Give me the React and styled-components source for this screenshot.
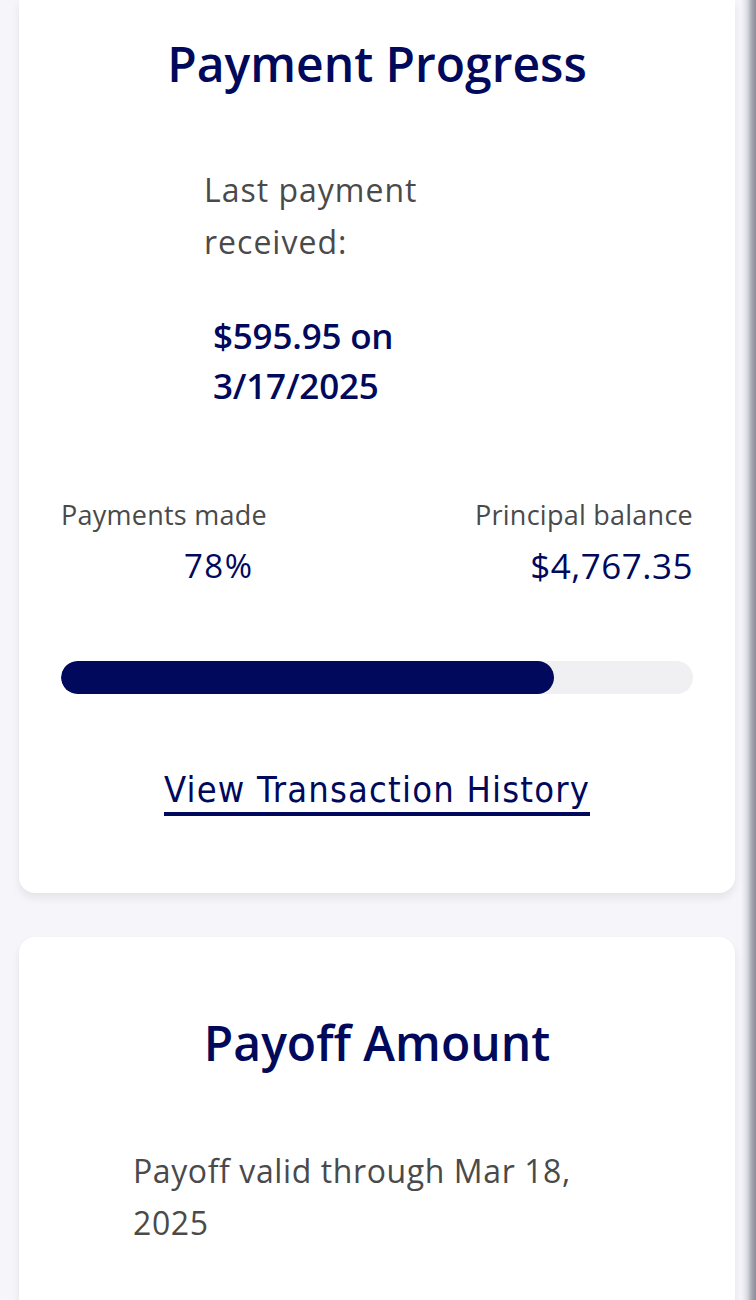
import React from "react";
import styled, { createGlobalStyle } from "styled-components";

const Global = createGlobalStyle`
  html, body { margin: 0; padding: 0; }
  html {
    background: linear-gradient(to right, #f6f6fa 0, #f6f6fa 741px, #dcdce4 747px, #a4a4b0 752px, #8c8c98 756px);
  }
  body { font-family: "Open Sans", sans-serif; -webkit-font-smoothing: antialiased; }
`;

const NAVY = "#00095b";
const GREY = "#4a4a4a";

const Page = styled.div`
  display: flex;
  flex-direction: column;
  gap: 44px;
  padding: 0 21px 0 19px;
  width: 756px;
  box-sizing: border-box;
`;

const Card = styled.section`
  background: #fff;
  border-radius: ${(p) => (p.$cut ? "0 0 16px 16px" : "16px")};
  box-shadow: 0 5px 8px rgba(0, 0, 30, 0.08);
  padding: ${(p) => p.$pad};
  box-sizing: border-box;
  min-height: ${(p) => p.$minH || "auto"};
`;

const Title = styled.h2`
  margin: 0;
  text-align: center;
  font-family: "Open Sans", sans-serif;
  font-weight: 600;
  font-size: 48px;
  line-height: 60px;
  letter-spacing: 0;
  color: ${NAVY};
`;

const LastBlock = styled.div`
  margin: 70px 0 0 143px;
  width: 260px;
`;

const Label = styled.p`
  margin: 0;
  font-family: "Open Sans", sans-serif;
  font-size: 32px;
  line-height: 52px;
  letter-spacing: 1px;
  color: ${GREY};
`;

const Amount = styled.p`
  margin: 43px 0 0;
  padding-left: 9px;
  font-family: "Open Sans", sans-serif;
  font-weight: 600;
  font-size: 35px;
  line-height: 50px;
  letter-spacing: -0.2px;
  color: ${NAVY};
  width: 210px;
`;

const StatRow = styled.div`
  display: flex;
  justify-content: space-between;
  margin-top: 89px;
`;

const Stat = styled.div`
  display: flex;
  flex-direction: column;
  align-items: ${(p) => (p.$right ? "flex-end" : "flex-start")};
  gap: 16px;
`;

const StatLabel = styled.span`
  font-family: "Open Sans", sans-serif;
  font-size: 27px;
  line-height: 30px;
  letter-spacing: 0.25px;
  color: ${GREY};
`;

const StatValue = styled.span`
  font-family: "Open Sans", sans-serif;
  font-size: ${(p) => p.$size}px;
  line-height: 40px;
  letter-spacing: ${(p) => p.$ls}px;
  color: ${NAVY};
  padding-left: ${(p) => p.$indent || 0}px;
`;

const Track = styled.div`
  margin-top: 75px;
  height: 33px;
  border-radius: 17px;
  background: #f0f0f2;
  overflow: hidden;
`;

const Fill = styled.div`
  height: 100%;
  border-radius: 17px;
  background: ${NAVY};
`;

const LinkWrap = styled.div`
  display: flex;
  justify-content: center;
  margin-top: 76px;
`;

const HistoryLink = styled.a`
  font-family: "DejaVu Sans Condensed", "DejaVu Sans", sans-serif;
  font-size: 36px;
  line-height: 40px;
  letter-spacing: 1.2px;
  color: ${NAVY};
  text-decoration: none;
  padding-bottom: 2px;
  border-bottom: 4px solid ${NAVY};
  cursor: pointer;
`;

const PayoffText = styled.p`
  margin: 72px 0 0 72px;
  width: 470px;
  font-family: "Open Sans", sans-serif;
  font-size: 32px;
  line-height: 52px;
  letter-spacing: 0.6px;
  color: ${GREY};
`;

export default function App() {
  const pct = 78;
  return (
    <>
      <Global />
      <Page>
        <Card $cut $pad="34px 42px 77px 42px">
          <Title>Payment Progress</Title>
          <LastBlock>
            <Label>Last payment received:</Label>
            <Amount>$595.95 on 3/17/2025</Amount>
          </LastBlock>
          <StatRow>
            <Stat>
              <StatLabel>Payments made</StatLabel>
              <StatValue $size={33} $ls={1.5} $indent={123}>{pct}%</StatValue>
            </Stat>
            <Stat $right>
              <StatLabel>Principal balance</StatLabel>
              <StatValue $size={35} $ls={0.5}>$4,767.35</StatValue>
            </Stat>
          </StatRow>
          <Track>
            <Fill style={{ width: `${pct}%` }} />
          </Track>
          <LinkWrap>
            <HistoryLink>View Transaction History</HistoryLink>
          </LinkWrap>
        </Card>
        <Card $pad="76px 42px 80px 42px" $minH="400px">
          <Title>Payoff Amount</Title>
          <PayoffText>Payoff valid through Mar 18, 2025</PayoffText>
        </Card>
      </Page>
    </>
  );
}
